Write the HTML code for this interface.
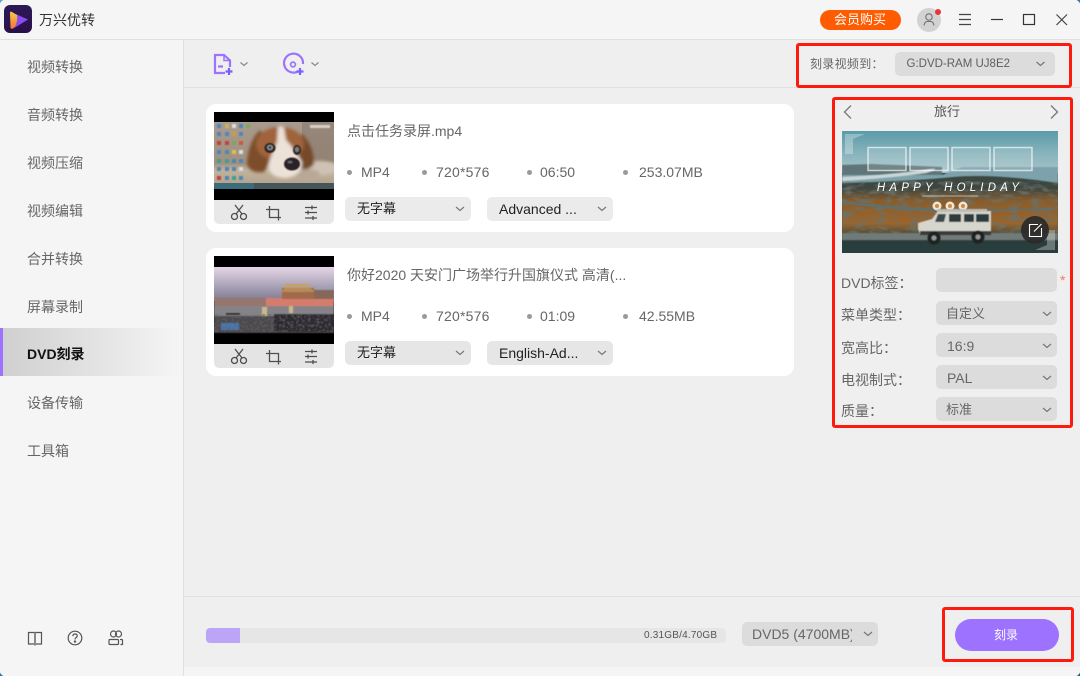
<!DOCTYPE html>
<html lang="zh"><head><meta charset="utf-8"><title>万兴优转</title>
<style>
html,body{margin:0;padding:0}
body{width:1080px;height:676px;position:relative;overflow:hidden;background:#f5f5f5;font-family:"Liberation Sans","Noto Sans CJK SC",sans-serif;font-size:14px;color:#666}
.a{position:absolute}
.t{position:absolute;white-space:nowrap;line-height:20px}
.nav{position:absolute;left:27px;line-height:20px;white-space:nowrap;color:#666}
.dd{position:absolute;background:#dcdcdc;border-radius:5px}
.dd svg{position:absolute}
.card{position:absolute;left:206px;width:588px;height:128px;background:#fff;border-radius:10px}
.dot{position:absolute;width:5px;height:5px;border-radius:50%;background:#999}
.red{position:absolute;border:3px solid #ff1a0e;border-radius:3px;box-sizing:border-box}
.lab{position:absolute;left:841px;white-space:nowrap;line-height:20px;color:#666}
svg{display:block}
</style></head><body>

<!-- main panels -->
<div class="a" style="left:184px;top:40px;width:896px;height:627px;background:#efefef"></div>
<div class="a" style="left:0;top:39px;width:1080px;height:1px;background:#e0e0e0"></div>
<div class="a" style="left:183px;top:40px;width:1px;height:636px;background:#e0e0e0"></div>
<div class="a" style="left:184px;top:87px;width:896px;height:1px;background:#e2e2e2"></div>
<div class="a" style="left:184px;top:596px;width:896px;height:1px;background:#e2e2e2"></div>
<div class="a" style="left:184px;top:667px;width:896px;height:9px;background:#f5f5f5"></div>

<!-- window corners -->
<svg class="a" style="left:0;top:0" width="4" height="4"><path d="M0 0H3.500Q1 1 0 3.500Z" fill="#5aa6c8"/></svg>
<svg class="a" style="left:1076px;top:0" width="4" height="4"><path d="M4 0H.5Q3 1 4 3.500Z" fill="#3c6ea8"/></svg>
<svg class="a" style="left:0;top:672px" width="4" height="4"><path d="M0 4H3.500Q1 3 0 .5Z" fill="#1c7f9c"/></svg>
<svg class="a" style="left:1076px;top:672px" width="4" height="4"><path d="M4 4H.5Q3 3 4 .5Z" fill="#1c5f7c"/></svg>

<!-- title bar -->
<svg class="a" style="left:4px;top:5px" width="28" height="28" viewBox="0 0 28 28">
<defs><linearGradient id="lg" x1="0" y1="0" x2="0" y2="1"><stop offset="0" stop-color="#2b1a55"/><stop offset="1" stop-color="#2a0f4a"/></linearGradient>
<linearGradient id="lo" x1="0" y1="0" x2="0" y2="1"><stop offset="0" stop-color="#f7c948"/><stop offset="1" stop-color="#f2743a"/></linearGradient></defs>
<rect width="28" height="28" rx="6" fill="url(#lg)"/>
<path d="M6 6.500L24 14.500L11 22.500Z" fill="#8a4cf0"/>
<path d="M6 8Q6 6 8 7L13 10Q14 15 11 22Q8 25 6.500 23Z" fill="url(#lo)"/>
</svg>
<div class="t" style="left:39px;top:10px;color:#333">万兴优转</div>
<div class="a" style="left:820px;top:10px;width:81px;height:20px;background:#ff5b00;border-radius:10px"></div>
<div class="t" style="left:834px;top:10px;color:#fff;font-size:13px">会员购买</div>
<div class="a" style="left:917px;top:8px;width:24px;height:24px;border-radius:50%;background:#d2d2d2"></div>
<svg class="a" style="left:917px;top:8px" width="24" height="24" fill="none" stroke="#707070" stroke-width="1.100"><circle cx="12" cy="9" r="3.200"/><path d="M7 17.500Q7.500 14 10 13.500H14Q16.500 14 17 17.500"/></svg>
<div class="a" style="left:935px;top:9px;width:6px;height:6px;border-radius:50%;background:#e8343a"></div>
<svg class="a" style="left:955px;top:10px" width="120" height="20" fill="none" stroke="#444" stroke-width="1.200">
<path d="M4 4.500H16M4 9.500H16M4 14.500H16"/>
<path d="M36 9.500H48" stroke="#333"/>
<rect x="68.500" y="4.500" width="11" height="10" stroke="#333"/>
<path d="M101.500 4.500L112 15M112 4.500L101.500 15" stroke="#444"/>
</svg>

<!-- sidebar -->
<div class="a" style="left:0;top:328px;width:180px;height:48px;background:linear-gradient(90deg,#cfcfcf,#f5f5f5)"></div>
<div class="a" style="left:0;top:328px;width:3px;height:48px;background:#9c72ff"></div>
<div class="nav" style="top:57px">视频转换</div>
<div class="nav" style="top:105px">音频转换</div>
<div class="nav" style="top:153px">视频压缩</div>
<div class="nav" style="top:201px">视频编辑</div>
<div class="nav" style="top:249px">合并转换</div>
<div class="nav" style="top:297px">屏幕录制</div>
<div class="nav" style="top:344px;color:#111;font-weight:bold">DVD刻录</div>
<div class="nav" style="top:393px">设备传输</div>
<div class="nav" style="top:441px">工具箱</div>
<svg class="a" style="left:26px;top:629px" width="100" height="18" fill="none" stroke="#555" stroke-width="1.200">
<path d="M2.500 3.500H9V15H2.500ZM9 3.500H15.500V15H9Z"/><path d="M9 3.500V16.500" stroke="#888" stroke-width="2"/>
<circle cx="49" cy="9" r="6.800"/><path d="M46.800 7.200Q47 5 49 5Q51.300 5 51.200 7Q51 8.300 49.500 9Q49 9.500 49 10.500"/><circle cx="49" cy="12.600" r=".6" fill="#555"/>
<circle cx="87.500" cy="5" r="3"/><circle cx="92.500" cy="5" r="3"/><rect x="83" y="10.500" width="9.500" height="5" rx="1"/><path d="M94 10.500H95.500Q96.500 10.500 96.500 11.500V15.500H94.500"/>
</svg>

<!-- toolbar -->
<svg class="a" style="left:210px;top:50px" width="120" height="28" fill="none" stroke-width="2.200">
<defs><linearGradient id="pg" x1="0" y1="0" x2="1" y2="1"><stop offset="0" stop-color="#a37bff"/><stop offset="1" stop-color="#7b5cff"/></linearGradient></defs>
<path d="M15 23H5V5H14L20 10.500V17" stroke="#9c72ff"/><path d="M14 5V10.500H20" stroke="#9c72ff" stroke-width="1.500"/><path d="M8 16.500H13" stroke="#9c72ff"/>
<path d="M19 18V25M15.500 21.500H22.500" stroke="#7860ff"/>
<path d="M30.500 12.500L34 15.500L37.500 12.500" stroke="#888" stroke-width="1.200"/>
<path d="M88 21.500A9.500 9.500 0 1 1 93 14" stroke="#9c72ff"/><circle cx="83" cy="14.500" r="2.400" stroke="#9c72ff" stroke-width="1.700"/>
<path d="M90 18V25M86.500 21.500H93.500" stroke="#7860ff"/>
<path d="M101.500 12.500L105 15.500L108.500 12.500" stroke="#888" stroke-width="1.200"/>
</svg>
<div class="t" style="left:810px;top:54px;font-size:12px;letter-spacing:.3px">刻录视频到：</div>
<div class="dd" style="left:895px;top:52px;width:160px;height:24px"><svg style="left:140px;top:9px" width="11" height="7" fill="none" stroke="#777" stroke-width="1.200"><path d="M1.500 1L5.500 4.500L9.500 1"/></svg></div>
<div class="t" style="left:906.500px;top:54px;font-size:11.500px;color:#5e5e5e">G:DVD-RAM UJ8E2</div>

<!-- card 1 -->
<div class="card" style="top:104px"></div>
<div class="a" style="left:214px;top:200px;width:120px;height:24px;background:#e8e8e8;border-radius:0 0 5px 5px"></div>
<svg class="a" style="left:214px;top:112px" width="120" height="88" viewBox="0 0 120 88">
<defs><filter id="b1"><feGaussianBlur stdDeviation="1.500"/></filter><filter id="b05"><feGaussianBlur stdDeviation=".5"/></filter>
<filter id="b3"><feGaussianBlur stdDeviation="3"/></filter>
<filter id="nz" x="0" y="0" width="100%" height="100%"><feTurbulence type="fractalNoise" baseFrequency=".35" numOctaves="2" seed="4"/><feColorMatrix values="0 0 0 0 .12  0 0 0 0 .12  0 0 0 0 .12  0 0 0 2.600 -1.100"/></filter>
<linearGradient id="bgd" x1="0" y1="0" x2="0" y2="1"><stop offset="0" stop-color="#a99a8e"/><stop offset=".62" stop-color="#a1917f"/><stop offset=".72" stop-color="#c2b29c"/><stop offset="1" stop-color="#b0a08c"/></linearGradient></defs>
<rect width="120" height="88" fill="#000"/>
<rect y="10" width="120" height="67" fill="url(#bgd)"/>
<rect x="88" y="10" width="32" height="40" fill="#8b7a6e" opacity=".6"/>
<g filter="url(#b05)">
<rect x="96" y="13" width="20" height="3" fill="#d8d0c8"/>
<g fill="#4d86b8"><rect x="3" y="12" width="4" height="4"/><rect x="11" y="12" width="4" height="4" fill="#c9b25a"/><rect x="18" y="12" width="4" height="4" fill="#ddd"/><rect x="25" y="12" width="4" height="4"/><rect x="32" y="12" width="4" height="4" fill="#7aa860"/>
<rect x="3" y="20" width="4" height="4"/><rect x="11" y="20" width="4" height="4"/><rect x="18" y="20" width="4" height="4" fill="#c9a040"/><rect x="25" y="20" width="4" height="4"/>
<rect x="3" y="29" width="4" height="4" fill="#c04040"/><rect x="11" y="29" width="4" height="4" fill="#c04040"/><rect x="18" y="29" width="4" height="4" fill="#7aa860"/><rect x="25" y="29" width="4" height="4" fill="#c95a40"/>
<rect x="3" y="38" width="4" height="4"/><rect x="11" y="38" width="4" height="4"/><rect x="18" y="38" width="4" height="4" fill="#d9c050"/><rect x="25" y="38" width="4" height="4" fill="#ddd"/>
<rect x="3" y="47" width="4" height="4" fill="#3aa090"/><rect x="11" y="47" width="4" height="4" fill="#3aa090"/><rect x="18" y="47" width="4" height="4"/><rect x="25" y="47" width="4" height="4"/>
<rect x="3" y="55" width="4" height="4"/><rect x="11" y="55" width="4" height="4"/><rect x="18" y="55" width="4" height="4"/><rect x="25" y="55" width="4" height="4" fill="#ddd"/>
<rect x="3" y="64" width="4" height="4" fill="#c04040"/><rect x="11" y="64" width="4" height="4"/><rect x="18" y="64" width="4" height="4" fill="#3aa090"/><rect x="25" y="64" width="4" height="4"/></g>
</g>
<g filter="url(#b1)">
<ellipse cx="106" cy="56" rx="18" ry="7" fill="#cfc2b4"/>
<ellipse cx="92" cy="62" rx="14" ry="5" fill="#b8a898"/>
<path d="M46 18Q34 30 33 52Q36 62 50 60L62 40Z" fill="#7d4d2a"/>
<path d="M88 22Q100 34 100 52Q94 60 86 56L80 36Z" fill="#74492c"/>
<ellipse cx="66" cy="32" rx="24" ry="17" fill="#a0643a"/>
<path d="M64 15Q68 13 70 16L72 28Q80 36 88 50Q88 64 72 66Q56 66 54 54Q58 40 63 30Z" fill="#ece2d8"/>
</g>
<g filter="url(#b05)">
<ellipse cx="56" cy="36" rx="5.500" ry="5" fill="#2f221e"/><ellipse cx="56" cy="35.500" rx="3" ry="2.600" fill="#8f9aa6"/><ellipse cx="56" cy="35.500" rx="1.400" ry="1.400" fill="#2a2a30"/>
<ellipse cx="83" cy="38" rx="4" ry="5" fill="#2f221e"/><ellipse cx="83" cy="37.500" rx="2.200" ry="2.600" fill="#77808a"/>
<ellipse cx="78" cy="52" rx="8" ry="6.500" fill="#2c2226"/><ellipse cx="76" cy="50" rx="2.500" ry="1.300" fill="#6a6a70"/>
</g>
<rect x="0" y="71" width="120" height="6" fill="#45565a"/>
<rect x="0" y="71" width="40" height="6" fill="#3a7a90" opacity=".6"/>
</svg>
<svg class="a" style="left:226px;top:202px" width="100" height="22" fill="none" stroke="#4e4e4e" stroke-width="1.300">
<circle cx="8.500" cy="14.500" r="3"/><circle cx="17.500" cy="14.500" r="3"/><path d="M10 12L17 3M16 12L9 3"/>
<path d="M43.500 4V15.500H55M40 7.500H52.500V18.500" />
<path d="M79 5.500H91M79 10.500H91M79 16H91" /><path d="M86 3.500V7.500M82 8.500V12.500M87 14V18" />
</svg>
<div class="t" style="left:347px;top:121px">点击任务录屏.mp4</div>
<div class="dot" style="left:347px;top:170px"></div><div class="t" style="left:361px;top:162px">MP4</div>
<div class="dot" style="left:422px;top:170px"></div><div class="t" style="left:436px;top:162px;letter-spacing:.2px">720*576</div>
<div class="dot" style="left:527px;top:170px"></div><div class="t" style="left:540px;top:162px">06:50</div>
<div class="dot" style="left:623px;top:170px"></div><div class="t" style="left:639px;top:162px">253.07MB</div>
<div class="dd" style="left:345px;top:197px;width:126px;height:24px;background:#ebebeb"><svg style="left:110px;top:9px" width="11" height="7" fill="none" stroke="#777" stroke-width="1.200"><path d="M1 1L5 4.500L9 1"/></svg></div>
<div class="t" style="left:357px;top:199px;color:#222;font-size:13px">无字幕</div>
<div class="dd" style="left:487px;top:197px;width:126px;height:24px;background:#ebebeb"><svg style="left:110px;top:9px" width="11" height="7" fill="none" stroke="#777" stroke-width="1.200"><path d="M1 1L5 4.500L9 1"/></svg></div>
<div class="t" style="left:499px;top:199px;color:#222">Advanced ...</div>

<!-- card 2 -->
<div class="card" style="top:248px"></div>
<div class="a" style="left:214px;top:344px;width:120px;height:24px;background:#e4e4e4;border-radius:0 0 5px 5px"></div>
<svg class="a" style="left:214px;top:256px" width="120" height="88" viewBox="0 0 120 88">
<defs><linearGradient id="sky" x1="0" y1="0" x2="0" y2="1"><stop offset="0" stop-color="#e6d6e6"/><stop offset=".6" stop-color="#a59eb4"/><stop offset="1" stop-color="#7e7a8e"/></linearGradient></defs>
<rect width="120" height="88" fill="#000"/>
<rect y="11" width="120" height="34" fill="url(#sky)"/>
<g filter="url(#b05)">
<rect y="42" width="120" height="8" fill="#96766e"/>
<rect x="52" y="42" width="68" height="8" fill="#d67c6c"/>
<rect x="68" y="32" width="32" height="11" fill="#a06a4c"/>
<path d="M66 36L71 32H96L102 36Z" fill="#b88a56"/>
<path d="M68 31L72 28H94L98 31Z" fill="#c8a060"/>
<rect x="100" y="34" width="20" height="9" fill="#85685a"/>
<rect y="50" width="120" height="10" fill="#858388"/>
<rect y="60" width="120" height="17" fill="#4c4a4e"/>
<rect x="60" y="58" width="60" height="18" fill="#2e2c30"/>
<rect x="7" y="67" width="18" height="7" fill="#4a78b0"/>
<rect x="12" y="57" width="14" height="2" fill="#222"/>
<rect x="48" y="51" width="5" height="9" fill="#c9b98a"/><rect x="75" y="50" width="4" height="7" fill="#c9b98a"/>
</g>
<rect x="0" y="58" width="120" height="18" filter="url(#nz)" opacity=".8"/>
</svg>
<svg class="a" style="left:226px;top:346px" width="100" height="22" fill="none" stroke="#4e4e4e" stroke-width="1.300">
<circle cx="8.500" cy="14.500" r="3"/><circle cx="17.500" cy="14.500" r="3"/><path d="M10 12L17 3M16 12L9 3"/>
<path d="M43.500 4V15.500H55M40 7.500H52.500V18.500" />
<path d="M79 5.500H91M79 10.500H91M79 16H91" /><path d="M86 3.500V7.500M82 8.500V12.500M87 14V18" />
</svg>
<div class="t" style="left:347px;top:265px">你好2020 天安门广场举行升国旗仪式 高清(...</div>
<div class="dot" style="left:347px;top:314px"></div><div class="t" style="left:361px;top:306px">MP4</div>
<div class="dot" style="left:422px;top:314px"></div><div class="t" style="left:436px;top:306px;letter-spacing:.2px">720*576</div>
<div class="dot" style="left:527px;top:314px"></div><div class="t" style="left:540px;top:306px">01:09</div>
<div class="dot" style="left:623px;top:314px"></div><div class="t" style="left:639px;top:306px">42.55MB</div>
<div class="dd" style="left:345px;top:341px;width:126px;height:24px;background:#e6e6e6"><svg style="left:110px;top:9px" width="11" height="7" fill="none" stroke="#777" stroke-width="1.200"><path d="M1 1L5 4.500L9 1"/></svg></div>
<div class="t" style="left:357px;top:343px;color:#222;font-size:13px">无字幕</div>
<div class="dd" style="left:487px;top:341px;width:126px;height:24px;background:#e6e6e6"><svg style="left:110px;top:9px" width="11" height="7" fill="none" stroke="#777" stroke-width="1.200"><path d="M1 1L5 4.500L9 1"/></svg></div>
<div class="t" style="left:499px;top:343px;color:#222">English-Ad...</div>

<!-- right panel -->
<svg class="a" style="left:840px;top:103px" width="225" height="18" fill="none" stroke="#777" stroke-width="1.300"><path d="M11 2.500L4.500 9L11 15.500"/><path d="M211 2.500L217.500 9L211 15.500"/></svg>
<div class="t" style="left:934px;top:102px;font-size:13px;color:#555">旅行</div>
<svg class="a" style="left:842px;top:131px" width="216" height="122" viewBox="0 0 216 122">
<defs><linearGradient id="hs" x1="0" y1="0" x2="0" y2="1"><stop offset="0" stop-color="#5b9ba8"/><stop offset=".6" stop-color="#8db6be"/><stop offset="1" stop-color="#a6c4ca"/></linearGradient>
<linearGradient id="hl" x1="0" y1="0" x2="0" y2="1"><stop offset="0" stop-color="#39463f"/><stop offset=".22" stop-color="#3f4740"/><stop offset=".42" stop-color="#8a5c2c"/><stop offset=".8" stop-color="#9d652c"/><stop offset="1" stop-color="#4a4a38"/></linearGradient>
<filter id="nz2" x="0" y="0" width="100%" height="100%"><feTurbulence type="fractalNoise" baseFrequency=".09 .22" numOctaves="3" seed="9"/><feColorMatrix values="0 0 0 0 .14  0 0 0 0 .17  0 0 0 0 .15  0 0 0 3.200 -1.400"/></filter></defs>
<rect width="216" height="122" fill="#2e4a4c"/>
<rect width="216" height="42" fill="url(#hs)"/>
<g filter="url(#b05)">
<path d="M0 34L30 33L100 36V44H0Z" fill="#5f7478"/>
<path d="M0 44H100L120 36H216V56H0Z" fill="#7ea2ab"/>
<path d="M0 50Q50 47 84 42Q100 37 88 38Q50 44 0 46Z" fill="#c9d6d8"/>
<path d="M0 52Q70 50 110 46Q150 42 216 52V104H0Z" fill="url(#hl)"/>
</g>
<rect y="50" width="216" height="54" filter="url(#nz2)" opacity=".8"/>
<path d="M0 70Q40 75 100 78Q160 80 216 76V78Q140 82 70 79Q30 77 0 72Z" fill="#5f7070"/>
<g filter="url(#b05)">
<rect y="102" width="216" height="8" fill="#6f7a78"/>
<rect y="109" width="216" height="13" fill="#2c3e3e"/>
</g>
<g fill="rgba(255,255,255,.12)" stroke="#fff" stroke-opacity=".65" stroke-width="1.500">
<rect x="26" y="16.500" width="38" height="23"/><rect x="68" y="16.500" width="38" height="23"/><rect x="110" y="16.500" width="38" height="23"/><rect x="152" y="16.500" width="38" height="23"/>
</g>
<path d="M3 3H23L11 8V23L3 23Z" fill="#fff" opacity=".3"/>
<path d="M213 119H193L205 114V99L213 99Z" fill="#fff" opacity=".3"/>
<text x="108" y="60" text-anchor="middle" font-family="Liberation Sans,sans-serif" font-style="italic" font-size="11.500" fill="#fff" letter-spacing="4.200">HAPPY HOLIDAY</text>
<rect x="80" y="64.500" width="56" height="1" fill="#fff" opacity=".55"/>
<circle cx="95" cy="75" r="4.500" fill="#f0e6d8"/><circle cx="108" cy="75" r="4.500" fill="#f0e6d8"/><circle cx="121" cy="75" r="4.500" fill="#f0e6d8"/>
<circle cx="95" cy="75" r="2" fill="#d08a40"/><circle cx="108" cy="75" r="2" fill="#d08a40"/><circle cx="121" cy="75" r="2" fill="#d08a40"/>
<g filter="url(#b05)">
<path d="M76 98V92L90 88L96 80H149V103H78Z" fill="#d6d6ce"/>
<rect x="95" y="78" width="50" height="3" fill="#bcbcb4"/>
<path d="M96 83H104L102 91H93Z" fill="#3c4a4c"/><rect x="107" y="83" width="12" height="8" fill="#2f3a3c"/><rect x="122" y="83" width="10" height="8" fill="#2f3a3c"/><rect x="134" y="83" width="13" height="8" fill="#2f3a3c"/>
<rect x="78" y="100" width="71" height="4" fill="#3a3a3a"/>
<circle cx="92" cy="107" r="6.500" fill="#1e2222"/><circle cx="92" cy="107" r="2.500" fill="#999"/>
<circle cx="136" cy="106" r="6.500" fill="#1e2222"/><circle cx="136" cy="106" r="2.500" fill="#999"/>
</g>
<circle cx="193" cy="99" r="14" fill="#2a2a2a" opacity=".92"/>
<path d="M196 93.500H187.500V105.500H199.500V97" fill="none" stroke="#fff" stroke-width="1.100"/><path d="M192 100.500L199.500 93" stroke="#fff" stroke-width="1.100"/>
</svg>
<div class="lab" style="top:273px">DVD标签：</div>
<div class="lab" style="top:305px">菜单类型：</div>
<div class="lab" style="top:338px">宽高比：</div>
<div class="lab" style="top:370px">电视制式：</div>
<div class="lab" style="top:401px">质量：</div>
<div class="dd" style="left:936px;top:268px;width:121px;height:24px"></div>
<div class="t" style="left:1060px;top:270px;color:#f47a6a;font-size:14px">*</div>
<div class="dd" style="left:936px;top:301px;width:121px;height:24px"><svg style="left:106px;top:10px" width="11" height="7" fill="none" stroke="#777" stroke-width="1.200"><path d="M1 1L5 4.500L9 1"/></svg></div>
<div class="t" style="left:946px;top:304px;font-size:13px">自定义</div>
<div class="dd" style="left:936px;top:333px;width:121px;height:24px"><svg style="left:106px;top:10px" width="11" height="7" fill="none" stroke="#777" stroke-width="1.200"><path d="M1 1L5 4.500L9 1"/></svg></div>
<div class="t" style="left:947px;top:336px">16:9</div>
<div class="dd" style="left:936px;top:365px;width:121px;height:24px"><svg style="left:106px;top:10px" width="11" height="7" fill="none" stroke="#777" stroke-width="1.200"><path d="M1 1L5 4.500L9 1"/></svg></div>
<div class="t" style="left:947px;top:368px">PAL</div>
<div class="dd" style="left:936px;top:397px;width:121px;height:24px"><svg style="left:106px;top:10px" width="11" height="7" fill="none" stroke="#777" stroke-width="1.200"><path d="M1 1L5 4.500L9 1"/></svg></div>
<div class="t" style="left:946px;top:400px;font-size:13px">标准</div>

<!-- bottom bar -->
<div class="a" style="left:206px;top:628px;width:520px;height:15px;background:#e6e6e6;border-radius:4px;overflow:hidden"><div style="width:34px;height:15px;background:#bca4f7"></div></div>
<div class="t" style="left:644px;top:626px;font-size:10px;color:#555;letter-spacing:.2px">0.31GB/4.70GB</div>
<div class="dd" style="left:742px;top:622px;width:136px;height:24px"><svg style="left:121px;top:9px" width="11" height="7" fill="none" stroke="#777" stroke-width="1.200"><path d="M1 1L5 4.500L9 1"/></svg></div>
<div class="a" style="left:752px;top:624px;width:100px;height:20px;overflow:hidden;white-space:nowrap;line-height:20px">DVD5 (4700MB)</div>
<div class="a" style="left:955px;top:619px;width:104px;height:32px;border-radius:16px;background:#9c72ff"></div>
<div class="t" style="left:994px;top:625px;color:#fff;font-size:12px">刻录</div>

<!-- red annotation boxes -->
<div class="red" style="left:796px;top:43px;width:276px;height:45px"></div>
<div class="red" style="left:832px;top:97px;width:241px;height:331px"></div>
<div class="red" style="left:942px;top:607px;width:132px;height:55px"></div>
</body></html>
